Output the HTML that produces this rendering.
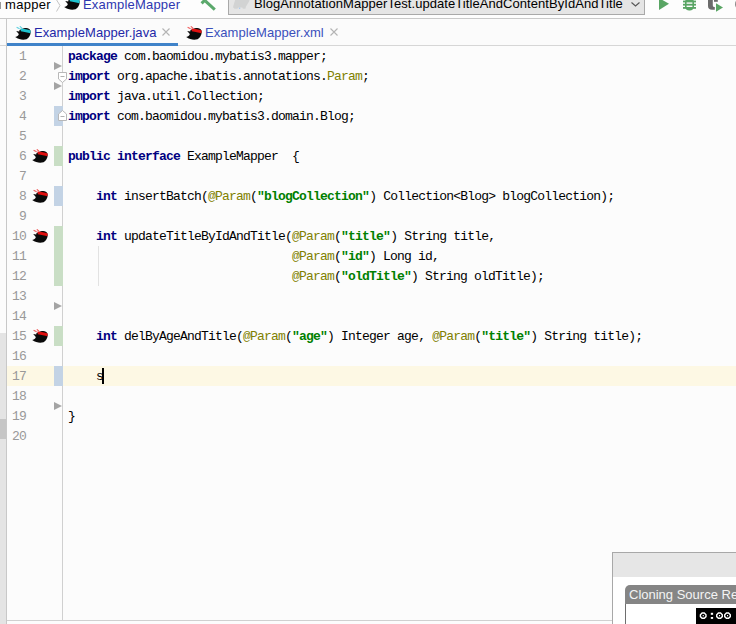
<!DOCTYPE html>
<html><head><meta charset="utf-8">
<style>
html,body{margin:0;padding:0;}
body{width:736px;height:624px;overflow:hidden;position:relative;background:#fcfcfc;font-family:"Liberation Sans",sans-serif;}
.a{position:absolute;}
.ui{font-family:"Liberation Sans",sans-serif;font-size:13px;line-height:16px;white-space:pre;}
.code{font-family:"Liberation Mono",monospace;font-size:13px;letter-spacing:-0.8px;white-space:pre;line-height:20px;color:#000;}
.ln{font-family:"Liberation Mono",monospace;font-size:13px;letter-spacing:-0.8px;white-space:pre;line-height:20px;color:#999;text-align:right;width:26px;left:0;}
.k{color:#000080;font-weight:bold;}
.an{color:#808000;}
.s{color:#008000;font-weight:bold;}
</style></head><body>




<!-- nav bar -->
<div class="a" style="left:0;top:0;width:736px;height:18px;background:#fdfdfd;"></div>
<div class="a" style="left:0;top:18px;width:736px;height:1px;background:#c9c9c9;"></div>
<div class="a ui" style="left:5px;top:-3.5px;color:#000;letter-spacing:0.3px;">mapper</div>
<div class="a ui" style="left:83px;top:-3.5px;color:#2e37b0;letter-spacing:0.2px;">ExampleMapper</div>
<!-- dropdown -->
<div class="a" style="left:228px;top:-2px;width:415px;height:15px;background:#e5e5e5;border:1px solid #a9a9a9;"></div>
<div class="a ui" style="left:254px;top:-4px;color:#000;letter-spacing:0.06px;">BlogAnnotationMapperTest.updateTitleAndContentByIdAndTitle</div>


<!-- toolbar icons -->
<div class="a" style="left:0;top:2px;width:1px;height:7px;background:#9a9a9a;"></div>
<svg class="a" style="left:52px;top:0" width="12" height="14" viewBox="0 0 12 14"><path d="M4,-1 L8,5.5 L4.5,11.5" fill="none" stroke="#c4c4c4" stroke-width="1"/></svg>
<svg class="a" style="left:196px;top:0" width="24" height="14" viewBox="0 0 24 14"><path d="M5.6,3.4 L10.5,-1.5" stroke="#5aa86b" stroke-width="3"/><path d="M9.5,1.2 L18.8,9.6" stroke="#5aa86b" stroke-width="3"/></svg>
<svg class="a" style="left:230px;top:0" width="22" height="12" viewBox="0 0 22 12"><path d="M4.2,3 L5.5,-1 L19.6,-1 L19.2,1.2 L16,6.5 L15.4,8.8 L13,8.8 L12.2,7.4 L8.4,7.4 L7.4,8.8 L4.6,8.8 L3,7.2 Z" fill="#d2d3d3"/><circle cx="9.6" cy="8.2" r="0.8" fill="#a8c8ee"/></svg>
<svg class="a" style="left:628px;top:0" width="16" height="10" viewBox="0 0 16 10"><path d="M3.5,2.5 L7.5,6 L11.5,2.5" fill="none" stroke="#555" stroke-width="1.1"/></svg>
<svg class="a" style="left:656px;top:0" width="16" height="12" viewBox="0 0 16 12"><path d="M3,-2 L13,3.8 L3,10 Z" fill="#59a564"/></svg>
<svg class="a" style="left:682px;top:0" width="16" height="12" viewBox="0 0 16 12"><g fill="#59a564"><rect x="3" y="-2" width="9" height="12.6" rx="4.2"/><rect x="1" y="0.6" width="13" height="1.8"/><rect x="1" y="3.8" width="13" height="1.8"/><rect x="1" y="7" width="13" height="1.8"/></g><g fill="#fbfbfb"><rect x="4.6" y="2.4" width="5.8" height="1.4"/><rect x="4.6" y="5.6" width="5.8" height="1.4"/></g></svg>
<svg class="a" style="left:706px;top:0" width="20" height="14" viewBox="0 0 20 14"><path d="M2,-1 L2,6 C2,8.5 3.5,9.8 6,9.8 L8.8,9.8 L8.8,7 C7.2,7 6.8,6.5 6.8,5 L6.8,-1 Z" fill="#6b6b6b"/><rect x="8" y="-1" width="3.8" height="2.8" fill="#6b6b6b"/><path d="M10,3.2 L17,7.5 L10,11.7 Z" fill="#59a564"/></svg>
<svg class="a" style="left:733px;top:0" width="6" height="12" viewBox="0 0 6 12"><path d="M6,0.5 C3.5,0.5 3,3 3,4.5 C3,6.5 4.5,8 6,8" fill="none" stroke="#8a8a8a" stroke-width="2"/></svg>
<!-- tabs row -->
<div class="a" style="left:0;top:19px;width:736px;height:26px;background:#fbfbfb;"></div>
<div class="a" style="left:0;top:45px;width:736px;height:1px;background:#d6d6d6;"></div>
<div class="a" style="left:7px;top:43px;width:171px;height:3px;background:#4083c9;"></div>
<div class="a ui" style="left:34px;top:24.5px;color:#2328a8;letter-spacing:0.06px;">ExampleMapper.java</div>
<div class="a ui" style="left:205px;top:24.5px;color:#3a50bb;letter-spacing:0.06px;">ExampleMapper.xml</div>

<!-- close x -->
<svg class="a" style="left:161px;top:27px" width="10" height="10" viewBox="0 0 10 10"><path d="M1.5,1.5 L8.5,8.5 M8.5,1.5 L1.5,8.5" stroke="#b4b4b4" stroke-width="1.1"/></svg>
<svg class="a" style="left:329px;top:27px" width="10" height="10" viewBox="0 0 10 10"><path d="M1.5,1.5 L8.5,8.5 M8.5,1.5 L1.5,8.5" stroke="#b4b4b4" stroke-width="1.1"/></svg>

<!-- left strip -->
<div class="a" style="left:0;top:333px;width:6px;height:291px;background:#e4e4e4;"></div>
<div class="a" style="left:0;top:419px;width:6px;height:20px;background:#c6c6c6;"></div>
<div class="a" style="left:6px;top:19px;width:1px;height:605px;background:#c8c8c8;"></div>

<!-- current line -->
<div class="a" style="left:7px;top:366px;width:729px;height:20px;background:#fdf8e4;"></div>

<!-- gutter line -->
<div class="a" style="left:62px;top:46px;width:1px;height:574px;background:#d0d0d0;"></div>
<!-- change markers -->
<div class="a" style="left:54px;top:106px;width:9px;height:20px;background:#c3d3e5;"></div>
<div class="a" style="left:54px;top:146px;width:9px;height:20px;background:#c9dec5;"></div>
<div class="a" style="left:54px;top:186px;width:9px;height:20px;background:#c3d3e5;"></div>
<div class="a" style="left:54px;top:226px;width:9px;height:60px;background:#c9dec5;"></div>
<div class="a" style="left:54px;top:326px;width:9px;height:20px;background:#c9dec5;"></div>
<div class="a" style="left:54px;top:366px;width:9px;height:20px;background:#c3d3e5;"></div>


<!-- gutter triangles -->
<svg class="a" style="left:54px;top:62px" width="8" height="8" viewBox="0 0 8 8"><path d="M0,0 L8,4 L0,8 Z" fill="#a4a4a4"/></svg>
<svg class="a" style="left:54px;top:82px" width="8" height="8" viewBox="0 0 8 8"><path d="M0,0 L8,4 L0,8 Z" fill="#a4a4a4"/></svg>
<svg class="a" style="left:54px;top:302px" width="8" height="8" viewBox="0 0 8 8"><path d="M0,0 L8,4 L0,8 Z" fill="#a4a4a4"/></svg>
<svg class="a" style="left:54px;top:402px" width="8" height="8" viewBox="0 0 8 8"><path d="M0,0 L8,4 L0,8 Z" fill="#a4a4a4"/></svg>
<!-- fold markers -->
<svg class="a" style="left:57px;top:72px" width="11" height="12" viewBox="0 0 11 12"><path d="M1.5,0.5 L9.5,0.5 L9.5,7 L5.5,10.5 L1.5,7 Z" fill="#fff" stroke="#b8b8b8" stroke-width="1"/><path d="M3.5,4.5 L7.5,4.5" stroke="#b0b0b0" stroke-width="1"/></svg>
<svg class="a" style="left:57px;top:109px" width="11" height="12" viewBox="0 0 11 12"><path d="M1.5,11.5 L9.5,11.5 L9.5,5 L5.5,1.5 L1.5,5 Z" fill="#fff" stroke="#b8b8b8" stroke-width="1"/><path d="M3.5,7.5 L7.5,7.5" stroke="#b0b0b0" stroke-width="1"/></svg>

<!-- bottom line -->
<div class="a" style="left:7px;top:620px;width:729px;height:1px;background:#d0d0d0;"></div>

<!-- line numbers -->
<div class="a ln" style="left:0;top:47px;width:26px;">1
2
3
4
5
6
7
8
9
10
11
12
13
14
15
16
17
18
19
20</div>

<!-- code -->
<div class="a code" style="left:68px;top:47px;"><span class="k">package</span> com.baomidou.mybatis3.mapper;
<span class="k">import</span> org.apache.ibatis.annotations.<span class="an">Param</span>;
<span class="k">import</span> java.util.Collection;
<span class="k">import</span> com.baomidou.mybatis3.domain.Blog;

<span class="k">public interface</span> ExampleMapper  {

    <span class="k">int</span> insertBatch(<span class="an">@Param</span>(<span class="s">"blogCollection"</span>) Collection&lt;Blog&gt; blogCollection);

    <span class="k">int</span> updateTitleByIdAndTitle(<span class="an">@Param</span>(<span class="s">"title"</span>) String title,
                                <span class="an">@Param</span>(<span class="s">"id"</span>) Long id,
                                <span class="an">@Param</span>(<span class="s">"oldTitle"</span>) String oldTitle);


    <span class="k">int</span> delByAgeAndTitle(<span class="an">@Param</span>(<span class="s">"age"</span>) Integer age, <span class="an">@Param</span>(<span class="s">"title"</span>) String title);

    s

}
</div>
<!-- caret -->
<div class="a" style="left:102px;top:368px;width:2px;height:16px;background:#000;"></div>
<!-- indent guide -->
<div class="a" style="left:98px;top:246px;width:1px;height:40px;background:#e2e2e2;"></div>


<!-- icons -->
<svg class="a" style="left:15px;top:26px" width="16" height="14" viewBox="0 0 16 14"><path d="M4.5,4 C6.5,3.2 8.5,2.4 10,2 C12.5,1.6 14.8,2.4 15.5,4.8 C16.2,8 14.5,11.5 11.5,13.2 C8.5,14.2 4,13.8 0.2,11 C2.6,10.6 3.6,9.4 3.8,8 L1.2,5 L4.2,5.4 Z" fill="#0a0a0a"/><path d="M5.5,2.4 C9,2.6 12.8,3.2 15.7,4.4 L15.4,7.2 C12.5,6.6 9.5,6 5.8,5.2 Z" fill="#1ec3cf"/><path d="M1.6,1.2 L4.6,2.8 M4.8,0.4 L7.2,2.4" stroke="#5fd0e0" stroke-width="1.2"/></svg>
<svg class="a" style="left:186px;top:26px" width="16" height="14" viewBox="0 0 16 14"><path d="M4.5,4 C6.5,3.2 8.5,2.4 10,2 C12.5,1.6 14.8,2.4 15.5,4.8 C16.2,8 14.5,11.5 11.5,13.2 C8.5,14.2 4,13.8 0.2,11 C2.6,10.6 3.6,9.4 3.8,8 L1.2,5 L4.2,5.4 Z" fill="#0a0a0a"/><path d="M5.5,2.4 C9,2.6 12.8,3.2 15.7,4.4 L15.4,7.2 C12.5,6.6 9.5,6 5.8,5.2 Z" fill="#e01010"/><path d="M1.6,1.2 L4.6,2.8 M4.8,0.4 L7.2,2.4" stroke="#f06060" stroke-width="1.2"/></svg>
<svg class="a" style="left:64px;top:-4px" width="16" height="14" viewBox="0 0 16 14"><path d="M4.5,4 C6.5,3.2 8.5,2.4 10,2 C12.5,1.6 14.8,2.4 15.5,4.8 C16.2,8 14.5,11.5 11.5,13.2 C8.5,14.2 4,13.8 0.2,11 C2.6,10.6 3.6,9.4 3.8,8 L1.2,5 L4.2,5.4 Z" fill="#0a0a0a"/><path d="M5.5,2.4 C9,2.6 12.8,3.2 15.7,4.4 L15.4,7.2 C12.5,6.6 9.5,6 5.8,5.2 Z" fill="#1ec3cf"/></svg>
<svg class="a" style="left:32px;top:149px" width="16" height="14" viewBox="0 0 16 14"><path d="M4.5,4 C6.5,3.2 8.5,2.4 10,2 C12.5,1.6 14.8,2.4 15.5,4.8 C16.2,8 14.5,11.5 11.5,13.2 C8.5,14.2 4,13.8 0.2,11 C2.6,10.6 3.6,9.4 3.8,8 L1.2,5 L4.2,5.4 Z" fill="#0a0a0a"/><path d="M5.5,2.4 C9,2.6 12.8,3.2 15.7,4.4 L15.4,7.2 C12.5,6.6 9.5,6 5.8,5.2 Z" fill="#e01010"/><path d="M1.6,1.2 L4.6,2.8 M4.8,0.4 L7.2,2.4" stroke="#f06060" stroke-width="1.2"/></svg>
<svg class="a" style="left:32px;top:189px" width="16" height="14" viewBox="0 0 16 14"><path d="M4.5,4 C6.5,3.2 8.5,2.4 10,2 C12.5,1.6 14.8,2.4 15.5,4.8 C16.2,8 14.5,11.5 11.5,13.2 C8.5,14.2 4,13.8 0.2,11 C2.6,10.6 3.6,9.4 3.8,8 L1.2,5 L4.2,5.4 Z" fill="#0a0a0a"/><path d="M5.5,2.4 C9,2.6 12.8,3.2 15.7,4.4 L15.4,7.2 C12.5,6.6 9.5,6 5.8,5.2 Z" fill="#e01010"/><path d="M1.6,1.2 L4.6,2.8 M4.8,0.4 L7.2,2.4" stroke="#f06060" stroke-width="1.2"/></svg>
<svg class="a" style="left:32px;top:229px" width="16" height="14" viewBox="0 0 16 14"><path d="M4.5,4 C6.5,3.2 8.5,2.4 10,2 C12.5,1.6 14.8,2.4 15.5,4.8 C16.2,8 14.5,11.5 11.5,13.2 C8.5,14.2 4,13.8 0.2,11 C2.6,10.6 3.6,9.4 3.8,8 L1.2,5 L4.2,5.4 Z" fill="#0a0a0a"/><path d="M5.5,2.4 C9,2.6 12.8,3.2 15.7,4.4 L15.4,7.2 C12.5,6.6 9.5,6 5.8,5.2 Z" fill="#e01010"/><path d="M1.6,1.2 L4.6,2.8 M4.8,0.4 L7.2,2.4" stroke="#f06060" stroke-width="1.2"/></svg>
<svg class="a" style="left:32px;top:329px" width="16" height="14" viewBox="0 0 16 14"><path d="M4.5,4 C6.5,3.2 8.5,2.4 10,2 C12.5,1.6 14.8,2.4 15.5,4.8 C16.2,8 14.5,11.5 11.5,13.2 C8.5,14.2 4,13.8 0.2,11 C2.6,10.6 3.6,9.4 3.8,8 L1.2,5 L4.2,5.4 Z" fill="#0a0a0a"/><path d="M5.5,2.4 C9,2.6 12.8,3.2 15.7,4.4 L15.4,7.2 C12.5,6.6 9.5,6 5.8,5.2 Z" fill="#e01010"/><path d="M1.6,1.2 L4.6,2.8 M4.8,0.4 L7.2,2.4" stroke="#f06060" stroke-width="1.2"/></svg>

<!-- popup -->
<div class="a" style="left:612px;top:552px;width:124px;height:72px;background:#fff;border-left:1px solid #a8a8a8;border-top:1px solid #a8a8a8;"></div>
<div class="a" style="left:613px;top:553px;width:123px;height:24px;background:#e6e6e6;"></div>
<div class="a" style="left:625px;top:590px;width:111px;height:34px;background:#fff;border-left:1px solid #6e6e6e;"></div>
<div class="a" style="left:625px;top:585px;width:112px;height:19px;background:#858585;border-top-left-radius:5px;"></div>
<div class="a ui" style="left:629px;top:587px;color:#f4f4f4;">Cloning Source Re</div>
<div class="a" style="left:696px;top:608px;width:40px;height:16px;background:#000;"></div>
<svg class="a" style="left:696px;top:608px" width="40" height="16" viewBox="0 0 40 16"><g fill="none" stroke="#fff" stroke-width="1.4"><path d="M6.1000000000000005,5.0 L8.3,5.0 L10.0,6.7 L10.0,8.600000000000001 L8.3,10.3 L6.1000000000000005,10.3 L4.4,8.600000000000001 L4.4,6.7 Z"/><path d="M22.4,5.0 L24.599999999999998,5.0 L26.299999999999997,6.7 L26.299999999999997,8.600000000000001 L24.599999999999998,10.3 L22.4,10.3 L20.7,8.600000000000001 L20.7,6.7 Z"/><path d="M30.4,5.0 L32.599999999999994,5.0 L34.3,6.7 L34.3,8.600000000000001 L32.599999999999994,10.3 L30.4,10.3 L28.7,8.600000000000001 L28.7,6.7 Z"/></g><g fill="#fff"><rect x="6.7" y="7" width="1.1" height="1.3"/><rect x="23.0" y="7" width="1.1" height="1.3"/><rect x="31.0" y="7" width="1.1" height="1.3"/><rect x="14.8" y="4.8" width="2.3" height="2"/><rect x="14.8" y="9" width="2.3" height="1.9"/></g></svg>

</body></html>
